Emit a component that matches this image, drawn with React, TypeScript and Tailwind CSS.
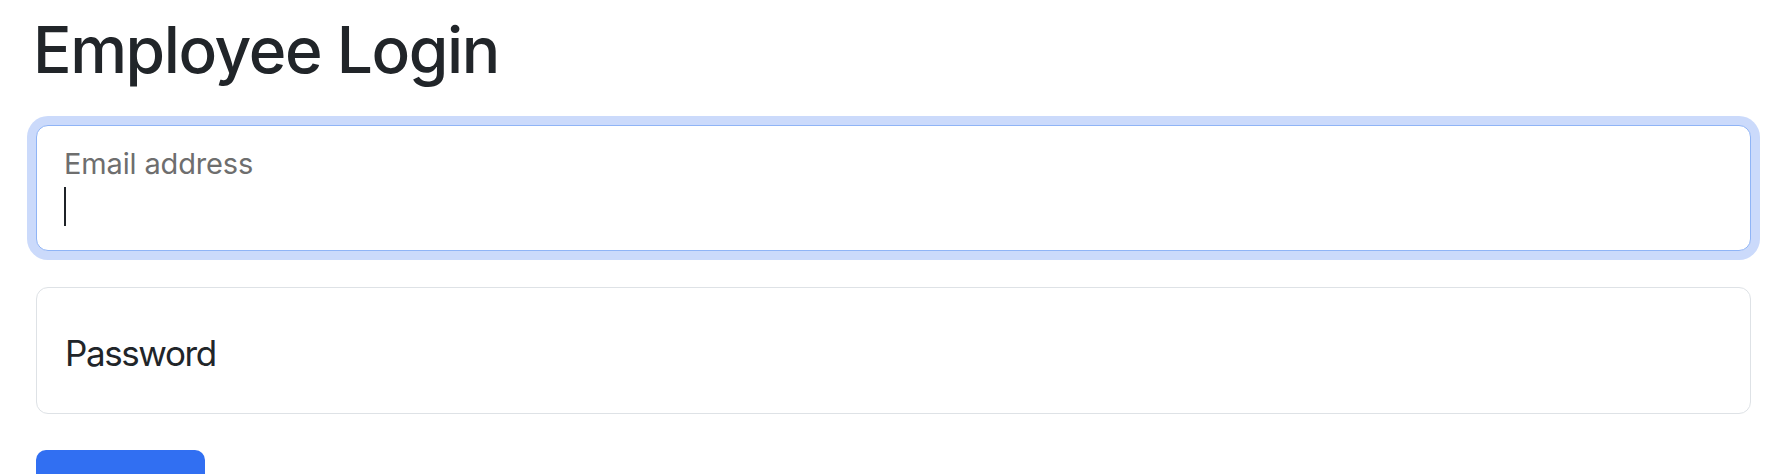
export default function App() {
  return (
    <div className="min-h-screen bg-white pl-[36px] pr-[23px] pt-[12px] font-['Inter',_'Liberation_Sans',_sans-serif] text-[#212529]">
      {/* Page title */}
      <h1 className="-ml-[3px] text-[64px] font-medium leading-[1.2] tracking-[-0.022em]">
        Employee Login
      </h1>

      <form className="mt-[36px] flex flex-col gap-[36px]">
        {/* Email field, focused */}
        <div className="h-[126px] rounded-[12px] border border-[#8fb4f6] bg-white pl-[27px] pt-[23px] shadow-[0_0_0_9px_#cbdafb]">
          <div className="text-[29px] leading-none tracking-[-0.005em] text-[#6e6e6e]">
            Email address
          </div>
          <div className="mt-[9px] h-[39px] w-[2px] bg-[#1f2328]" />
        </div>

        {/* Password field */}
        <div className="h-[127px] rounded-[12px] border border-[#dee2e6] bg-white pl-[28px] pt-[48px]">
          <div className="text-[35px] leading-none tracking-[-0.04em]">
            Password
          </div>
        </div>

        <div>
          <button
            type="button"
            aria-label="Login"
            className="h-[80px] w-[169px] rounded-[10px] bg-[#316ff2]"
          />
        </div>
      </form>
    </div>
  );
}
